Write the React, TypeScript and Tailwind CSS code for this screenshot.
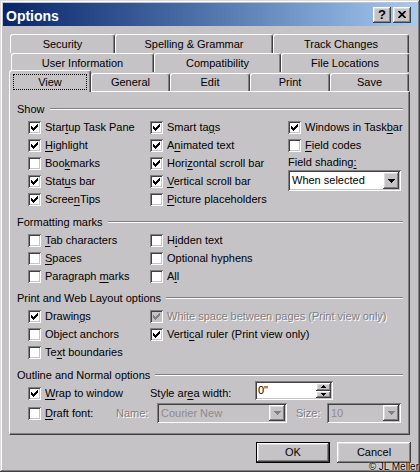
import React from "react";

const raised =
  "shadow-[inset_-1px_-1px_#404040,inset_1px_1px_#ffffff,inset_-2px_-2px_#808080,inset_2px_2px_#dcdcdc]";
const sunken =
  "shadow-[inset_1px_1px_#808080,inset_-1px_-1px_#ffffff,inset_2px_2px_#404040,inset_-2px_-2px_#c6c3c6]";
const greyText = "text-[#808080] [text-shadow:1px_1px_0_#ffffff]";

// "&x" marks the access key
function Acc({ text }: { text: string }) {
  const i = text.indexOf("&");
  if (i < 0) return <>{text}</>;
  return (
    <>
      {text.slice(0, i)}
      <span className="underline underline-offset-[2px]">{text[i + 1]}</span>
      {text.slice(i + 2)}
    </>
  );
}

function Tick({ color }: { color: string }) {
  const cols = [
    [3, 5],
    [4, 6],
    [5, 7],
    [6, 6],
    [7, 5],
    [8, 4],
    [9, 3],
  ];
  return (
    <svg width="13" height="13" className="absolute left-0 top-0" shapeRendering="crispEdges">
      {cols.map(([x, y]) => (
        <rect key={x} x={x} y={y} width="1" height="3" fill={color} />
      ))}
    </svg>
  );
}

function Arrow({ color }: { color: string }) {
  const rows = [
    [0, 0, 7],
    [1, 1, 5],
    [2, 2, 3],
    [3, 3, 1],
  ];
  return (
    <svg width="7" height="4" shapeRendering="crispEdges" className="block">
      {rows.map(([x, y, w]) => (
        <rect key={y} x={x} y={y} width={w} height="1" fill={color} />
      ))}
    </svg>
  );
}

function SmallArrow({ up }: { up?: boolean }) {
  const rows = up
    ? [
        [2, 0, 1],
        [1, 1, 3],
        [0, 2, 5],
      ]
    : [
        [0, 0, 5],
        [1, 1, 3],
        [2, 2, 1],
      ];
  return (
    <svg width="5" height="3" shapeRendering="crispEdges" className="block">
      {rows.map(([x, y, w]) => (
        <rect key={y} x={x} y={y} width={w} height="1" fill="#000" />
      ))}
    </svg>
  );
}

function CheckRow({
  label,
  checked,
  disabled,
}: {
  label: string;
  checked?: boolean;
  disabled?: boolean;
}) {
  return (
    <div className="flex items-center h-[18px] gap-[4px] whitespace-nowrap">
      <span
        className={
          "relative w-[13px] h-[13px] shrink-0 " +
          sunken +
          (disabled ? " bg-[#c6c3c6]" : " bg-white")
        }
      >
        {checked && <Tick color={disabled ? "#808080" : "#000000"} />}
      </span>
      <span className={disabled ? greyText : ""}>
        <Acc text={label} />
      </span>
    </div>
  );
}

function Heading({ title }: { title: string }) {
  return (
    <div className="flex items-center h-[14px] gap-[5px]">
      <span className="whitespace-nowrap">{title}</span>
      <div className="flex-1 border-t border-b border-t-[#808080] border-b-white" />
    </div>
  );
}

function Combo({
  value,
  className,
  disabled,
}: {
  value: string;
  className: string;
  disabled?: boolean;
}) {
  return (
    <div
      className={
        "flex items-center p-[2px] " +
        sunken +
        " " +
        className +
        (disabled ? " bg-[#c6c3c6]" : " bg-white")
      }
    >
      <span className={"flex-1 pl-[2px] whitespace-nowrap " + (disabled ? "text-[#8c8a8c]" : "")}>
        {value}
      </span>
      <span
        className={
          "w-[16px] self-stretch flex items-center justify-center bg-[#c6c3c6] " + raised
        }
      >
        <Arrow color={disabled ? "#808080" : "#000000"} />
      </span>
    </div>
  );
}

type TabDef = { label: string; w: string };

function Tab({ label, w }: TabDef) {
  return (
    <div
      className={
        "h-[19px] flex items-center justify-center border-t border-l border-r border-white border-r-[#404040] rounded-t-[3px] shadow-[inset_-1px_0_#808080] whitespace-nowrap " +
        w
      }
    >
      {label}
    </div>
  );
}

const row1: TabDef[] = [
  { label: "Security", w: "w-[105px]" },
  { label: "Spelling & Grammar", w: "w-[158px]" },
  { label: "Track Changes", w: "w-[136px]" },
];
const row2: TabDef[] = [
  { label: "User Information", w: "w-[143px]" },
  { label: "Compatibility", w: "w-[127px]" },
  { label: "File Locations", w: "w-[128px]" },
];
const row3: TabDef[] = [
  { label: "General", w: "w-[79px]" },
  { label: "Edit", w: "w-[80px]" },
  { label: "Print", w: "w-[80px]" },
  { label: "Save", w: "w-[79px]" },
];

export default function App() {
  return (
    <div className="relative w-[420px] h-[472px] overflow-hidden bg-[#c6c3c6] p-[3px] flex flex-col text-[11px] leading-[13px] text-black font-['Liberation_Sans',Arial,sans-serif] shadow-[inset_-1px_-1px_#404040,inset_1px_1px_#dcdcdc,inset_-2px_-2px_#808080,inset_2px_2px_#ffffff]">
      {/* title bar */}
      <div className="h-[23px] shrink-0 flex items-center bg-gradient-to-r from-[#0a246a] to-[#a6caf0] pl-[3px] pr-[6px]">
        <span className="flex-1 pt-[2px] text-white font-bold text-[14px] leading-[16px]">Options</span>
        <div className="flex gap-[2px] items-center">
          <span
            className={
              "w-[18px] h-[16px] bg-[#c6c3c6] flex items-center justify-center font-bold text-[13px] leading-[13px] " +
              raised
            }
          >
            ?
          </span>
          <span className={"w-[18px] h-[16px] bg-[#c6c3c6] flex items-center justify-center " + raised}>
            <svg width="8" height="7" viewBox="0 0 8 7">
              <path d="M0.5 0 L7.5 7 M7.5 0 L0.5 7" stroke="#000" strokeWidth="1.7" />
            </svg>
          </span>
        </div>
      </div>

      <div className="flex-1 flex flex-col px-[6px]">
        {/* tabs */}
        <div className="mt-[8px] flex ml-[1px]">
          {row1.map((t) => (
            <Tab key={t.label} {...t} />
          ))}
        </div>
        <div className="flex ml-[2px]">
          {row2.map((t) => (
            <Tab key={t.label} {...t} />
          ))}
        </div>
        <div className="flex items-end h-[19px] ml-[1px]">
          <div className="relative z-10 -ml-[1px] -mb-[1px] w-[82px] h-[22px] flex flex-col bg-[#c6c3c6] border-t border-l border-r border-white border-r-[#404040] rounded-t-[3px] shadow-[inset_-1px_0_#808080]">
            <div className="mx-[3px] mt-[3px] h-[16px] border border-dotted border-black flex items-center justify-center">
              View
            </div>
          </div>
          {row3.map((t) => (
            <div
              key={t.label}
              className={
                "h-[18px] flex items-center justify-center border-t border-l border-r border-white border-r-[#404040] rounded-t-[3px] shadow-[inset_-1px_0_#808080] " +
                t.w
              }
            >
              {t.label}
            </div>
          ))}
        </div>

        {/* panel */}
        <div className="h-[344px] mr-[1px] flex flex-col pl-[7px] pr-[6px] pt-[10px] border border-white border-r-[#404040] border-b-[#404040] shadow-[inset_-1px_-1px_#808080]">
          <Heading title="Show" />
          <div className="mt-[2px] ml-[11px] grid grid-cols-[122px_138px_1fr]">
            <div className="flex flex-col">
              <CheckRow label="Star&tup Task Pane" checked />
              <CheckRow label="&Highlight" checked />
              <CheckRow label="Boo&kmarks" />
              <CheckRow label="Stat&us bar" checked />
              <CheckRow label="Scree&nTips" checked />
            </div>
            <div className="flex flex-col">
              <CheckRow label="Smart ta&gs" checked />
              <CheckRow label="A&nimated text" checked />
              <CheckRow label="Hori&zontal scroll bar" checked />
              <CheckRow label="&Vertical scroll bar" checked />
              <CheckRow label="&Picture placeholders" />
            </div>
            <div className="flex flex-col">
              <CheckRow label="Windows in Task&bar" checked />
              <CheckRow label="&Field codes" />
              <div className="h-[14px] mt-[1px] flex items-center whitespace-nowrap">
                <Acc text="Field shading&:" />
              </div>
              <Combo value="When selected" className="mt-[1px] w-[113px] h-[21px]" />
            </div>
          </div>

          <div className="mt-[7px]">
            <Heading title="Formatting marks" />
          </div>
          <div className="mt-[2px] ml-[11px] grid grid-cols-[122px_1fr]">
            <div className="flex flex-col">
              <CheckRow label="&Tab characters" />
              <CheckRow label="&Spaces" />
              <CheckRow label="Paragraph &marks" />
            </div>
            <div className="flex flex-col">
              <CheckRow label="H&idden text" />
              <CheckRow label="Optional hyphens" />
              <CheckRow label="A&ll" />
            </div>
          </div>

          <div className="mt-[6px]">
            <Heading title="Print and Web Layout options" />
          </div>
          <div className="mt-[2px] ml-[11px] grid grid-cols-[122px_1fr]">
            <div className="flex flex-col">
              <CheckRow label="Drawin&gs" checked />
              <CheckRow label="Object anchors" />
              <CheckRow label="Te&xt boundaries" />
            </div>
            <div className="flex flex-col">
              <CheckRow label="White space between pages (Print view only)" checked disabled />
              <CheckRow label="Verti&cal ruler (Print view only)" checked />
            </div>
          </div>

          <div className="mt-[7px]">
            <Heading title="Outline and Normal options" />
          </div>
          <div className="-mt-[1px] ml-[11px] h-[20px] flex items-start">
            <div className="w-[122px] mt-[3px]">
              <CheckRow label="&Wrap to window" checked />
            </div>
            <div className="w-[105px] mt-[3px] h-[18px] flex items-center whitespace-nowrap">
              <Acc text="Style ar&ea width:" />
            </div>
            <div className={"w-[78px] h-[19px] bg-white flex items-center p-[2px] " + sunken}>
              <span className="flex-1 pl-[1px]">0"</span>
              <div className="w-[15px] self-stretch flex flex-col">
                <span className={"flex-1 bg-[#c6c3c6] flex items-center justify-center " + raised}>
                  <SmallArrow up />
                </span>
                <span className={"flex-1 bg-[#c6c3c6] flex items-center justify-center " + raised}>
                  <SmallArrow />
                </span>
              </div>
            </div>
          </div>
          <div className="mt-[2px] ml-[11px] h-[20px] flex items-center">
            <div className="w-[88px]">
              <CheckRow label="&Draft font:" />
            </div>
            <span className={"w-[41px] " + greyText}>Name:</span>
            <Combo value="Courier New" className="w-[130px] h-[20px]" disabled />
            <span className={"ml-[9px] w-[31px] " + greyText}>Size:</span>
            <Combo value="10" className="w-[74px] h-[20px]" disabled />
          </div>
        </div>

        {/* buttons */}
        <div className="mt-[7px] flex justify-end gap-[7px]">
          <div className="w-[74px] h-[21px] border border-black">
            <div className={"w-full h-full flex items-center justify-center " + raised}>OK</div>
          </div>
          <div className={"w-[74px] h-[21px] flex items-center justify-center " + raised}>Cancel</div>
        </div>
      </div>

      <span className="absolute right-[1px] top-[461px] text-[10px] leading-[11px] whitespace-nowrap [text-shadow:0_0_2px_#ffffff]">
        © JL Meller
      </span>
    </div>
  );
}
